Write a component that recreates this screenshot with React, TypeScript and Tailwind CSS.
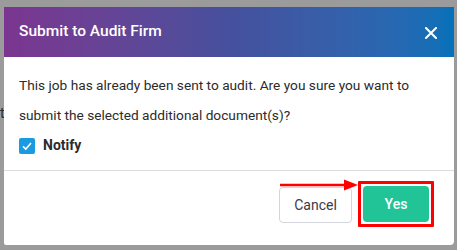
import React from 'react';

const App = () => {
  return (
    <div className="relative h-[250px] w-[457px] overflow-hidden bg-[#9b9b9b] font-['Roboto',sans-serif]">
      {/* bits of the page behind the overlay */}
      <span className="absolute left-0 top-[103px] text-[14px] text-[#2a2a2a]">t</span>

      <div className="absolute left-[4px] top-[7px] flex h-[238px] w-[450px] flex-col overflow-hidden rounded-br-[4px] rounded-bl-[2px] bg-white">
        {/* Header */}
        <div className="flex h-[50px] shrink-0 items-center justify-between bg-gradient-to-r from-[#7b3590] via-[#45509d] to-[#0371b9] pl-[15px] pr-[17px]">
          <h2 className="text-[15.5px] font-medium text-white">Submit to Audit Firm</h2>
          <svg width="12" height="12" viewBox="0 0 12 12" className="mt-[2px]">
            <path d="M1 1L11 11M11 1L1 11" stroke="white" strokeWidth="2" strokeLinecap="square" />
          </svg>
        </div>

        {/* Body */}
        <div className="h-[114px] shrink-0 border-b border-[#dcdcdc] pl-[15px] pt-[13px]">
          <p className="text-[13.7px] leading-[30px] text-[#2b2b2b]">
            This job has already been sent to audit. Are you sure you want to submit the selected additional document(s)?
          </p>
          <label className="mt-[5px] flex items-center gap-[8px]">
            <span className="flex h-[16px] w-[16px] items-center justify-center rounded-[2px] bg-[#1a9ae0]">
              <svg width="12" height="12" viewBox="0 0 12 12">
                <path d="M2 6.3L4.8 9L10 3" fill="none" stroke="white" strokeWidth="1.6" />
              </svg>
            </span>
            <span className="text-[14px] font-bold text-[#2b2b2b]">Notify</span>
          </label>
        </div>

        {/* Footer */}
        <div className="relative flex flex-1 items-start justify-end gap-[6px] pr-[20px] pt-[16px]">
          <button className="h-[36px] w-[73px] rounded-[4px] border border-[#d4d4dc] bg-white text-[14px] text-[#3a3a48]">
            Cancel
          </button>
          <div className="-mt-[6px] rounded-[1px] border-[3px] border-[#ff0000] p-[2px]">
            <button className="h-[36px] w-[66px] rounded-[4px] bg-[#20c497] text-[14px] font-medium text-white">
              Yes
            </button>
          </div>
          {/* red arrow */}
          <svg className="absolute left-[276px] top-[7px]" width="80" height="14" viewBox="0 0 80 14">
            <path d="M0 7H66" stroke="#ff0000" strokeWidth="2.4" />
            <path d="M64 1.5L78 7L64 12.5Z" fill="#ff0000" />
          </svg>
        </div>
      </div>
    </div>
  );
};

export default App;
